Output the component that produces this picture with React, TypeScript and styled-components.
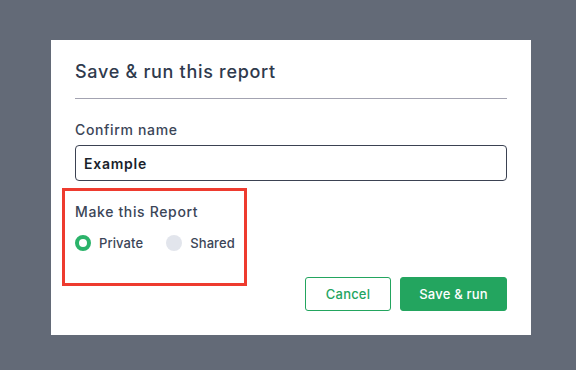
import React from "react";
import styled, { createGlobalStyle } from "styled-components";

const Global = createGlobalStyle`
  html, body { margin: 0; padding: 0; }
  body {
    background: #636a77;
    width: 576px;
    height: 370px;
    overflow: hidden;
    font-family: Inter, "Open Sans", sans-serif;
  }
`;

const Backdrop = styled.div`
  padding: 40px 45px 0 51px;
`;

const Modal = styled.div`
  position: relative;
  background: #ffffff;
  width: 480px;
  height: 295px;
  box-sizing: border-box;
  padding: 20px 24px 24px;
  display: flex;
  flex-direction: column;
`;

const Title = styled.h2`
  margin: 0;
  font-size: 18px;
  line-height: 24px;
  font-weight: 500;
  letter-spacing: 0.7px;
  color: #2f3a4d;
`;

const Divider = styled.hr`
  margin: 14px 0 0;
  border: none;
  height: 1px;
  background: #a3a3b1;
`;

const Label = styled.div<{ $gap: number }>`
  margin-top: ${(p) => p.$gap}px;
  font-size: 14px;
  line-height: 20px;
  font-weight: 500;
  letter-spacing: 0.65px;
  color: #3b4557;
`;

const Input = styled.input`
  margin-top: 5px;
  height: 36px;
  box-sizing: border-box;
  border: 1px solid #3b4252;
  border-radius: 4px;
  padding: 0 8px;
  font-family: inherit;
  font-size: 14px;
  font-weight: 600;
  letter-spacing: 0.75px;
  color: #1a1f2b;
  outline: none;
`;

const RadioRow = styled.div`
  margin-top: 11px;
  display: flex;
  align-items: center;
  gap: 23px;
  height: 20px;
`;

const RadioOption = styled.label`
  display: flex;
  align-items: center;
  gap: 8px;
  font-size: 13px;
  font-weight: 500;
  letter-spacing: 0.1px;
  color: #3b4557;
`;

const RadioDot = styled.span<{ $checked: boolean }>`
  width: 16px;
  height: 16px;
  box-sizing: border-box;
  border-radius: 50%;
  background: ${(p) => (p.$checked ? "#ffffff" : "#e2e5ec")};
  border: ${(p) => (p.$checked ? "4px solid #2bb36a" : "none")};
`;

const Highlight = styled.div`
  position: absolute;
  left: 11px;
  top: 148px;
  width: 185px;
  height: 98px;
  box-sizing: border-box;
  border: 3px solid #ee3b2f;
  pointer-events: none;
`;

const Actions = styled.div`
  margin-top: 24px;
  display: flex;
  justify-content: flex-end;
  gap: 9px;
`;

const Button = styled.button<{ $primary?: boolean }>`
  height: 34px;
  box-sizing: border-box;
  border-radius: 3px;
  border: 1px solid #23a55f;
  background: ${(p) => (p.$primary ? "#23a55f" : "#ffffff")};
  color: ${(p) => (p.$primary ? "#ffffff" : "#23a55f")};
  font-family: inherit;
  font-size: 13px;
  font-weight: 500;
  letter-spacing: 0.2px;
  width: ${(p) => (p.$primary ? 107 : 86)}px;
  cursor: pointer;
`;

export default function App() {
  return (
    <>
      <Global />
      <Backdrop>
        <Modal>
          <Title>Save &amp; run this report</Title>
          <Divider />
          <Label $gap={21}>Confirm name</Label>
          <Input defaultValue="Example" />
          <Label $gap={21}>Make this Report</Label>
          <RadioRow>
            <RadioOption>
              <RadioDot $checked={true} />
              Private
            </RadioOption>
            <RadioOption>
              <RadioDot $checked={false} />
              Shared
            </RadioOption>
          </RadioRow>
          <Actions>
            <Button>Cancel</Button>
            <Button $primary>Save &amp; run</Button>
          </Actions>
          <Highlight />
        </Modal>
      </Backdrop>
    </>
  );
}
